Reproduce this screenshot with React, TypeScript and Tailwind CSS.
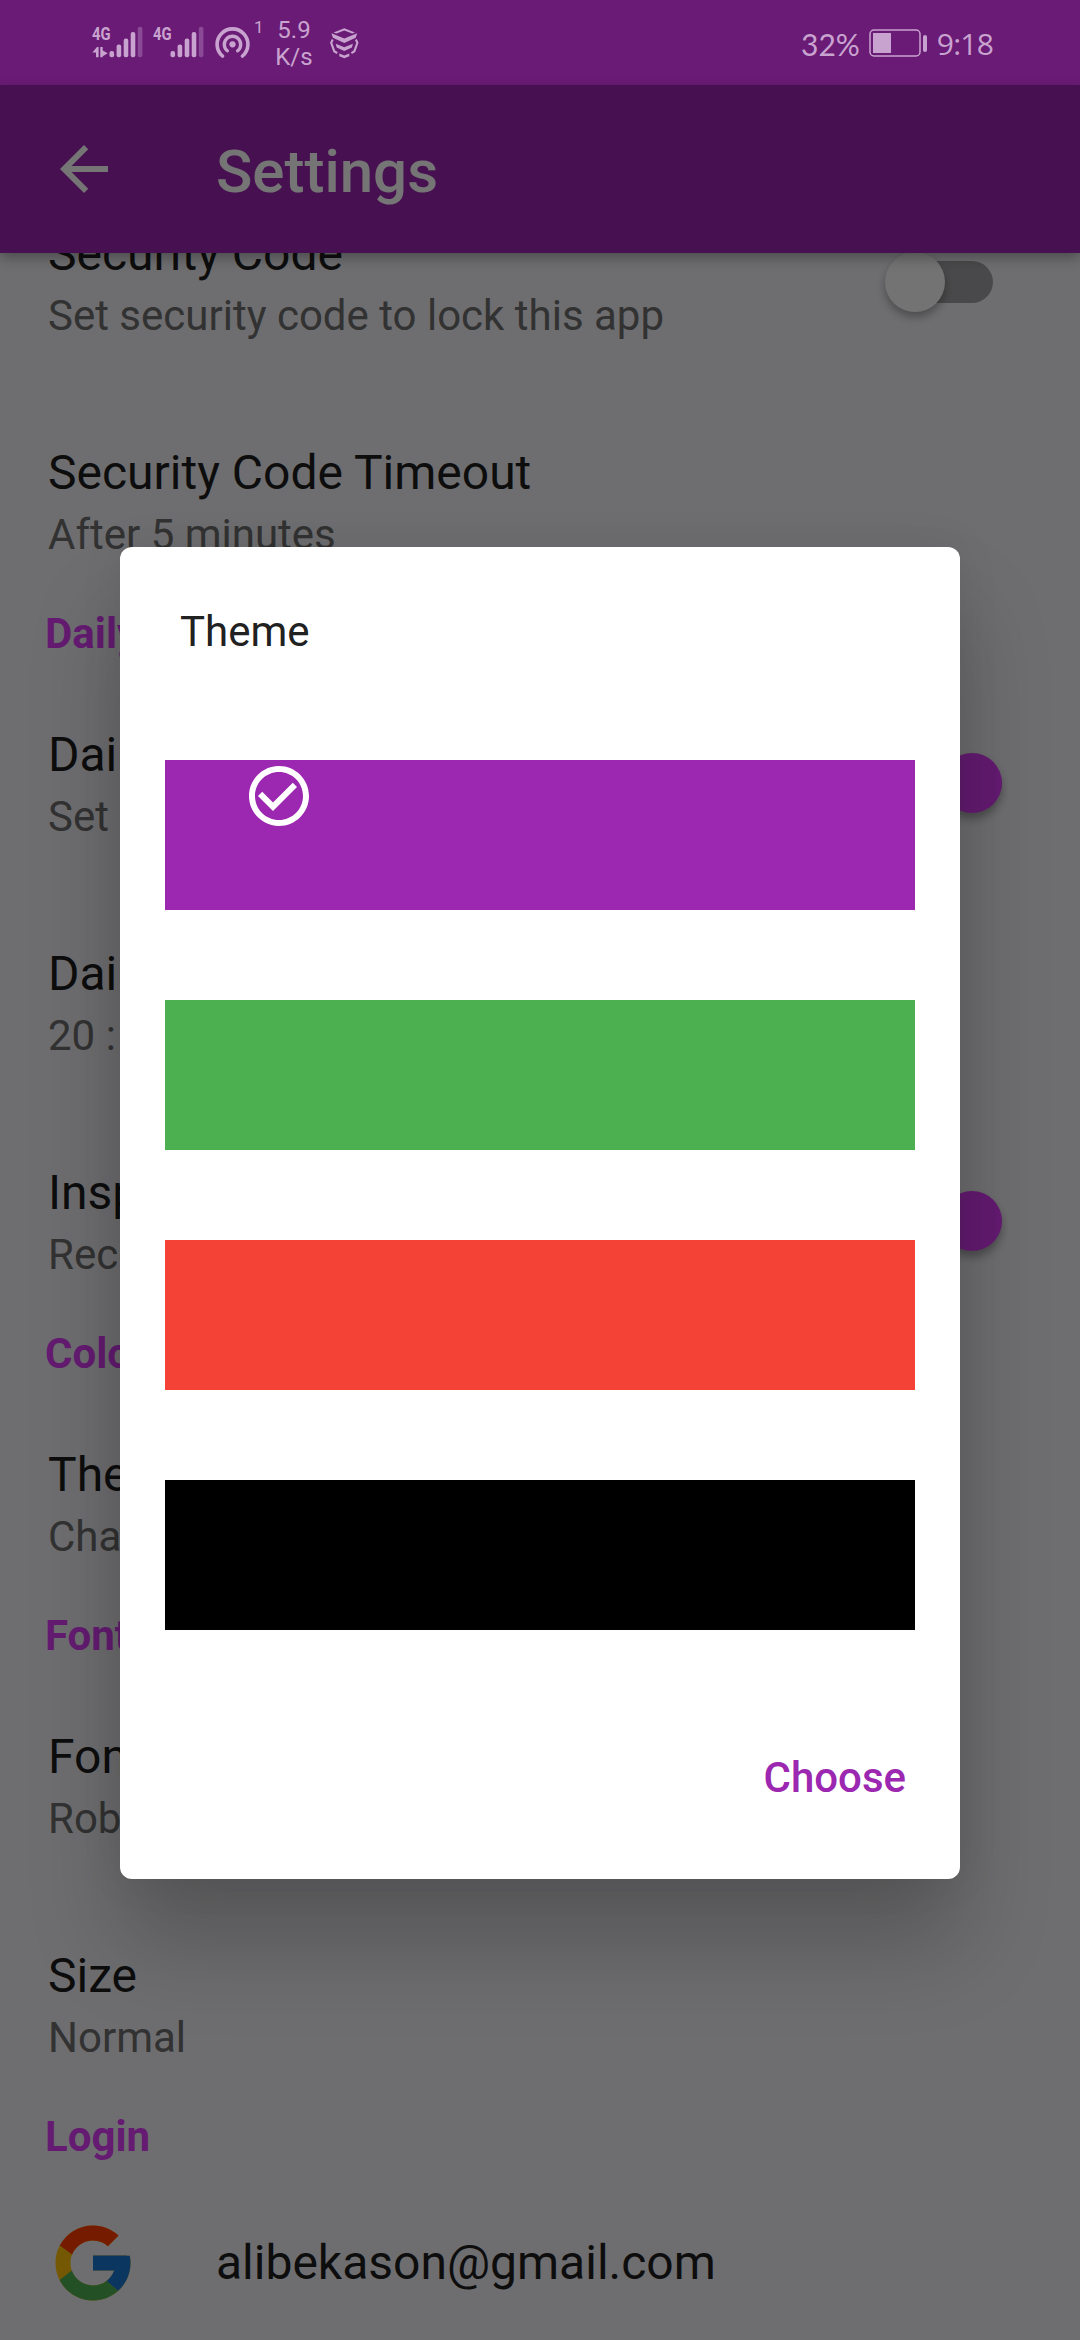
import React from "react";
import { FcGoogle } from "react-icons/fc";
import { MdArrowBack, MdCheckCircleOutline } from "react-icons/md";

function SignalBars() {
  return (
    <g fill="#c9a3d0">
      <rect x="17.5" y="31" width="4.6" height="6.3" rx="2" />
      <rect x="24.6" y="24.5" width="4.6" height="12.8" rx="2" />
      <rect x="31.7" y="18.5" width="4.6" height="18.8" rx="2" />
      <rect x="38.7" y="12" width="4.6" height="25.3" rx="2" />
      <rect x="45.8" y="6.7" width="4.6" height="30.6" rx="2" opacity="0.35" />
    </g>
  );
}

function Signal({ data }: { data?: boolean }) {
  return (
    <div className="relative h-[38px] w-[52px]">
      <svg className="absolute inset-0" width="52" height="38" viewBox="0 0 52 38">
        <SignalBars />
        {data && (
          <path
            fill="#c9a3d0"
            d="M6.6 27v10.200H4V32.400H.4L5 27zM8.300 27h2.400v3.400l5 2.900-5 3v.900H8.300z"
          />
        )}
      </svg>
      <span className="absolute left-0 top-[6px] origin-left scale-x-[0.78] text-[19px] font-bold leading-[15px]">4G</span>
    </div>
  );
}

function StatusBar() {
  return (
    <header className="flex h-[85px] shrink-0 bg-[#6a1b75] text-[#c9a3d0]">
      <div className="ml-[92px] mt-[20px] flex items-start">
        <Signal data />
        <div className="ml-[9px]">
          <Signal />
        </div>
        <svg className="ml-[9px] mt-[6px]" width="36" height="36" viewBox="0 0 36 36" fill="none" stroke="#c9a3d0" strokeLinecap="round">
          <circle cx="18.500" cy="18.300" r="3.100" fill="#c9a3d0" stroke="none" />
          <path d="M13.300 24.800a8.200 8.200 0 1 1 10.400 0" strokeWidth="3.400" />
          <path d="M8.500 30a15.400 15.400 0 1 1 20 0" strokeWidth="3.600" />
        </svg>
        <span className="ml-[4px] mt-[-3px] w-[9px] text-[17px] leading-[20px]">1</span>
        <div className="ml-[11px] mt-[-3px] w-[40px] text-center text-[24px] leading-[27px]">
          <div>5.9</div>
          <div>K/s</div>
        </div>
        <svg className="ml-[16px] mt-[8px]" width="30" height="31" viewBox="0 0 30 31" fill="#c9a3d0">
          <path d="M3.600 4.400L14.300.2 25 4.400l-2.700 1.200-8-3-8 3z" />
          <path d="M1.400 5.200l12.900 5.400 12.900-5.400-1.500 4.600-11.400 5.200L2.900 9.800z" />
          <path d="M5.700 15.800l8.600 3.400 8.600-3.400-1 3.800-7.600 3.400-7.600-3.400z" />
          <path d="M9.300 25.600l5 1.800 5-1.800v2.600l-5 2-5-2z" />
          <path d="M2.700 11.500L1.200 14.800l3 8.400 3 2M25.900 11.500l1.500 3.300-3 8.400-3 2" stroke="#c9a3d0" strokeWidth="2.100" fill="none" />
        </svg>
      </div>
      <div className="ml-auto mr-[87px] flex h-[88px] items-center font-['Lato'] text-[30px]">
        <span>32%</span>
        <svg className="ml-[9px] mt-[-2px]" width="59" height="28" viewBox="0 0 59 28">
          <rect x="1" y="1" width="50" height="26" rx="4" fill="none" stroke="#c9a3d0" strokeWidth="1.500" />
          <rect x="4" y="4" width="18" height="20" fill="#c9a3d0" />
          <rect x="54" y="6" width="4" height="17" rx="2" fill="#c9a3d0" />
        </svg>
        <span className="ml-[9px] mt-[-1px] font-['Open_Sans'] tracking-[-0.800px]">9:18</span>
      </div>
    </header>
  );
}

function Toggle({ on }: { on?: boolean }) {
  return on ? (
    <div className="mr-[78px] flex h-[60px] w-[117px] items-center justify-end">
      <div className="flex h-[42px] w-[108px] items-center justify-end rounded-full bg-[#db3cf6]/50">
        <div className="size-[60px] shrink-0 rounded-full bg-[#db3cf6] shadow-[0_6px_9px_rgba(0,0,0,0.3)]" />
      </div>
    </div>
  ) : (
    <div className="mr-[87px] flex h-[60px] w-[108px] items-center">
      <div className="flex h-[42px] w-[108px] items-center rounded-full bg-gradient-to-r from-transparent from-15% to-[#a0a0a3] to-15%">
        <div className="size-[60px] shrink-0 rounded-full bg-[#fafafa] shadow-[0_5px_9px_rgba(0,0,0,0.3)]" />
      </div>
    </div>
  );
}

function Item({ title, sub, toggle }: { title: string; sub: string; toggle?: "on" | "off" }) {
  return (
    <div className="flex h-[159px] shrink-0 items-start justify-between pl-[48px]">
      <div className="whitespace-nowrap">
        <div className="mb-[4px] text-[48px] leading-[56px] text-[#1e1e1e]">{title}</div>
        <div className="text-[42px] leading-[60px] text-[#6d6d6d]">{sub}</div>
      </div>
      {toggle && (
        <div className="mt-[26px]">
          <Toggle on={toggle === "on"} />
        </div>
      )}
    </div>
  );
}

function Section({ children }: { children: React.ReactNode }) {
  return <h2 className="h-[123px] shrink-0 pl-[45px] text-[42px] font-bold leading-[60px] text-[#db3cf6]">{children}</h2>;
}

const themes = [
  { name: "Purple", color: "bg-[#9c27b0]", selected: true },
  { name: "Green", color: "bg-[#4caf50]" },
  { name: "Red", color: "bg-[#f44336]" },
  { name: "Black", color: "bg-black" },
];

function ThemeDialog() {
  return (
    <div role="dialog" className="mt-[546.5px] flex h-[1332px] w-[840px] flex-col rounded-[12px] bg-white shadow-[0_66px_90px_rgba(0,0,0,0.21),0_0px_45px_rgba(0,0,0,0.07)]">
      <h3 className="ml-[60px] mt-[60px] text-[42px] leading-[50px] text-[#212121]">Theme</h3>
      <div className="mx-[45px] mt-[103.5px] flex flex-col gap-[90px]">
        {themes.map((t) => (
          <button key={t.name} aria-label={t.name} className={`flex h-[150px] items-start pl-[78px] ${t.color}`}>
            {t.selected && <MdCheckCircleOutline className="size-[72px] text-white" />}
          </button>
        ))}
      </div>
      <button className="ml-auto mr-[54px] mt-[123px] text-[42px] font-medium leading-[50px] text-[#9c27b0]">Choose</button>
    </div>
  );
}

export default function App() {
  return (
    <div className="relative flex h-[2340px] w-[1080px] flex-col overflow-hidden bg-[#efeff4] font-['Roboto',sans-serif]">
      <StatusBar />
      <div className="z-10 flex h-[168px] shrink-0 items-center bg-[#9c27b0] pl-[48px] text-white shadow-[0_5px_12px_rgba(0,0,0,0.3)]">
        <MdArrowBack className="size-[72px]" />
        <h1 className="ml-[96px] pt-[5px] text-[60px] font-medium leading-[70px]">Settings</h1>
      </div>
      <main className="mt-[-27px] flex flex-col">
        <Item title="Security Code" sub="Set security code to lock this app" toggle="off" />
        <div className="h-[60px]" />
        <Item title="Security Code Timeout" sub="After 5 minutes" />
        <Section>Daily</Section>
        <Item title="Daily" sub="Set" toggle="on" />
        <div className="h-[60px]" />
        <Item title="Daily" sub="20 : 00" />
        <div className="h-[60px]" />
        <Item title="Inspiration" sub="Receive" toggle="on" />
        <Section>Color</Section>
        <Item title="Theme" sub="Change" />
        <Section>Font</Section>
        <Item title="Font" sub="Roboto" />
        <div className="h-[60px]" />
        <Item title="Size" sub="Normal" />
        <Section>Login</Section>
        <div className="mt-[-12px] flex h-[90px] items-center pl-[48px]">
          <FcGoogle className="size-[90px]" />
          <span className="ml-[78px] text-[48px] leading-[60px] text-[#1e1e1e]">alibekason@gmail.com</span>
        </div>
      </main>
      <div className="absolute inset-x-0 bottom-0 top-[85px] z-20 bg-black/54" />
      <div className="absolute inset-0 z-30 flex items-start justify-center">
        <ThemeDialog />
      </div>
    </div>
  );
}
